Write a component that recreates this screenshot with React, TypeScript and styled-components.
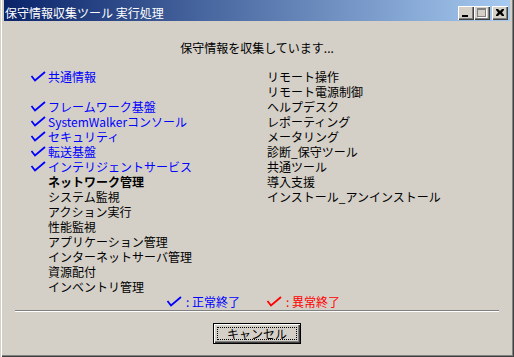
import React from 'react';
import styled, { createGlobalStyle } from 'styled-components';

const GlobalStyle = createGlobalStyle`
  html, body {
    margin: 0;
    padding: 0;
    background: #d4d0c8;
  }
  body {
    font-family: "Noto Sans CJK JP", "MS UI Gothic", sans-serif;
    font-size: 12px;
  }
`;

const colors = {
  face: '#d4d0c8',
  shadow: '#808080',
  dark: '#404040',
  done: '#0000ff',
  error: '#ff0000',
};

type Item = { label: string; state?: 'done' | 'active' | 'wait' };

const leftItems: (Item | null)[] = [
  { label: '共通情報', state: 'done' },
  null,
  { label: 'フレームワーク基盤', state: 'done' },
  { label: 'SystemWalkerコンソール', state: 'done' },
  { label: 'セキュリティ', state: 'done' },
  { label: '転送基盤', state: 'done' },
  { label: 'インテリジェントサービス', state: 'done' },
  { label: 'ネットワーク管理', state: 'active' },
  { label: 'システム監視' },
  { label: 'アクション実行' },
  { label: '性能監視' },
  { label: 'アプリケーション管理' },
  { label: 'インターネットサーバ管理' },
  { label: '資源配付' },
  { label: 'インベントリ管理' },
];

const rightItems: Item[] = [
  { label: 'リモート操作' },
  { label: 'リモート電源制御' },
  { label: 'ヘルプデスク' },
  { label: 'レポーティング' },
  { label: 'メータリング' },
  { label: '診断_保守ツール' },
  { label: '共通ツール' },
  { label: '導入支援' },
  { label: 'インストール_アンインストール' },
];

const Check = ({ color }: { color: string }) => (
  <svg width="16" height="13" viewBox="0 0 16 13">
    <path d="M1.5 6 L5 10.5 L15 2" fill="none" stroke={color} strokeWidth="1.8" />
  </svg>
);

const App = () => {
  return (
    <>
      <GlobalStyle />
      <Window>
        <TitleBar>
          <Title>保守情報収集ツール 実行処理</Title>
          <Caption>
            <CaptionButton>
              <MinGlyph />
            </CaptionButton>
            <CaptionButton>
              <MaxGlyph />
            </CaptionButton>
            <CaptionButton $gap>
              <CloseGlyph viewBox="0 0 8 7" width="8" height="7">
                <path d="M0 0h2l2 2 2-2h2v1L6 3.5 8 6v1H6L4 5 2 7H0V6l2-2.5L0 1z" fill="#000" />
              </CloseGlyph>
            </CaptionButton>
          </Caption>
        </TitleBar>

        <Body>
          <Heading>保守情報を収集しています...</Heading>
          <Columns>
            <List $left>
              {leftItems.map((item, i) =>
                item ? (
                  <Row key={i} $state={item.state}>
                    <Mark>{item.state === 'done' && <Check color={colors.done} />}</Mark>
                    {item.label}
                  </Row>
                ) : (
                  <Row key={i} />
                )
              )}
            </List>
            <List>
              {rightItems.map((item, i) => (
                <Row key={i}>{item.label}</Row>
              ))}
            </List>
          </Columns>

          <Legend>
            <LegendItem $color={colors.done}>
              <Check color={colors.done} />
              <span>: 正常終了</span>
            </LegendItem>
            <LegendItem $color={colors.error}>
              <Check color={colors.error} />
              <span>: 異常終了</span>
            </LegendItem>
          </Legend>

          <Separator />

          <Footer>
            <CancelButton>
              <Focus>キャンセル</Focus>
            </CancelButton>
          </Footer>
        </Body>
      </Window>
    </>
  );
};

export default App;

const Window = styled.div`
  box-sizing: border-box;
  width: 514px;
  height: 357px;
  display: flex;
  flex-direction: column;
  background: ${colors.face};
  padding: 0 4px 4px 4px;
  box-shadow:
    inset 1px 0 0 ${colors.face},
    inset 2px 0 0 #ffffff,
    inset -1px -1px 0 ${colors.dark},
    inset -2px -2px 0 ${colors.shadow};
`;

const TitleBar = styled.div`
  height: 21px;
  display: flex;
  align-items: center;
  justify-content: space-between;
  background: linear-gradient(to right, #0a246a, #a6caf0);
  color: #ffffff;
  padding: 0 2px 0 1px;
`;

const Title = styled.div`
  font-size: 12px;
  line-height: 12px;
  padding-top: 4px;
  white-space: nowrap;
`;

const Caption = styled.div`
  display: flex;
  align-items: center;
  padding-top: 5px;
`;

const CaptionButton = styled.div<{ $gap?: boolean }>`
  box-sizing: border-box;
  width: 16px;
  height: 14px;
  margin-left: ${(p) => (p.$gap ? 2 : 0)}px;
  background: ${colors.face};
  position: relative;
  display: flex;
  align-items: center;
  justify-content: center;
  box-shadow:
    inset 1px 1px 0 #ffffff,
    inset -1px -1px 0 ${colors.dark},
    inset -2px -2px 0 ${colors.shadow};
`;

const MinGlyph = styled.div`
  position: absolute;
  left: 4px;
  top: 9px;
  width: 6px;
  height: 2px;
  background: #000;
`;

const MaxGlyph = styled.div`
  position: absolute;
  left: 3px;
  top: 2px;
  width: 7px;
  height: 6px;
  border: 1px solid ${colors.shadow};
  border-top-width: 2px;
  box-shadow: 1px 1px 0 #ffffff;
`;

const CloseGlyph = styled.svg`
  display: block;
  margin: -1px 0 0 -1px;
`;

const Body = styled.div`
  flex: 1;
  display: flex;
  flex-direction: column;
`;

const Heading = styled.div`
  margin-top: 19px;
  text-align: center;
  line-height: 15px;
  color: #000;
`;

const Columns = styled.div`
  display: grid;
  grid-template-columns: 263px 1fr;
  margin-top: 14px;
`;

const List = styled.div<{ $left?: boolean }>`
  display: flex;
  flex-direction: column;
  padding-left: ${(p) => (p.$left ? 26 : 0)}px;
`;

const Row = styled.div<{ $state?: 'done' | 'active' | 'wait' }>`
  height: 15px;
  line-height: 15px;
  display: flex;
  align-items: center;
  white-space: nowrap;
  color: ${(p) => (p.$state === 'done' ? colors.done : '#000')};
  font-weight: ${(p) => (p.$state === 'active' ? 700 : 400)};
`;

const Mark = styled.span`
  width: 18px;
  height: 15px;
  display: flex;
  align-items: center;
`;

const Legend = styled.div`
  display: flex;
  justify-content: center;
  gap: 26px;
  height: 15px;
  margin-top: 0;
  padding-right: 8px;
`;

const LegendItem = styled.div<{ $color: string }>`
  display: flex;
  align-items: center;
  gap: 4px;
  color: ${(p) => p.$color};
  line-height: 15px;
`;

const Separator = styled.div`
  margin: 1px 11px 0 11px;
  border-top: 1px solid ${colors.shadow};
  border-bottom: 1px solid #ffffff;
`;

const Footer = styled.div`
  display: flex;
  justify-content: center;
  padding-top: 11px;
`;

const CancelButton = styled.button`
  box-sizing: border-box;
  width: 88px;
  height: 21px;
  padding: 3px;
  margin: 0;
  background: ${colors.face};
  border: 1px solid #000;
  font-family: inherit;
  font-size: 12px;
  color: #000;
  box-shadow:
    inset 1px 1px 0 #ffffff,
    inset -1px -1px 0 ${colors.dark},
    inset -2px -2px 0 ${colors.shadow};
  display: flex;
`;

const Focus = styled.span`
  flex: 1;
  border: 1px dotted #000;
  display: flex;
  align-items: center;
  justify-content: center;
  line-height: 12px;
`;
